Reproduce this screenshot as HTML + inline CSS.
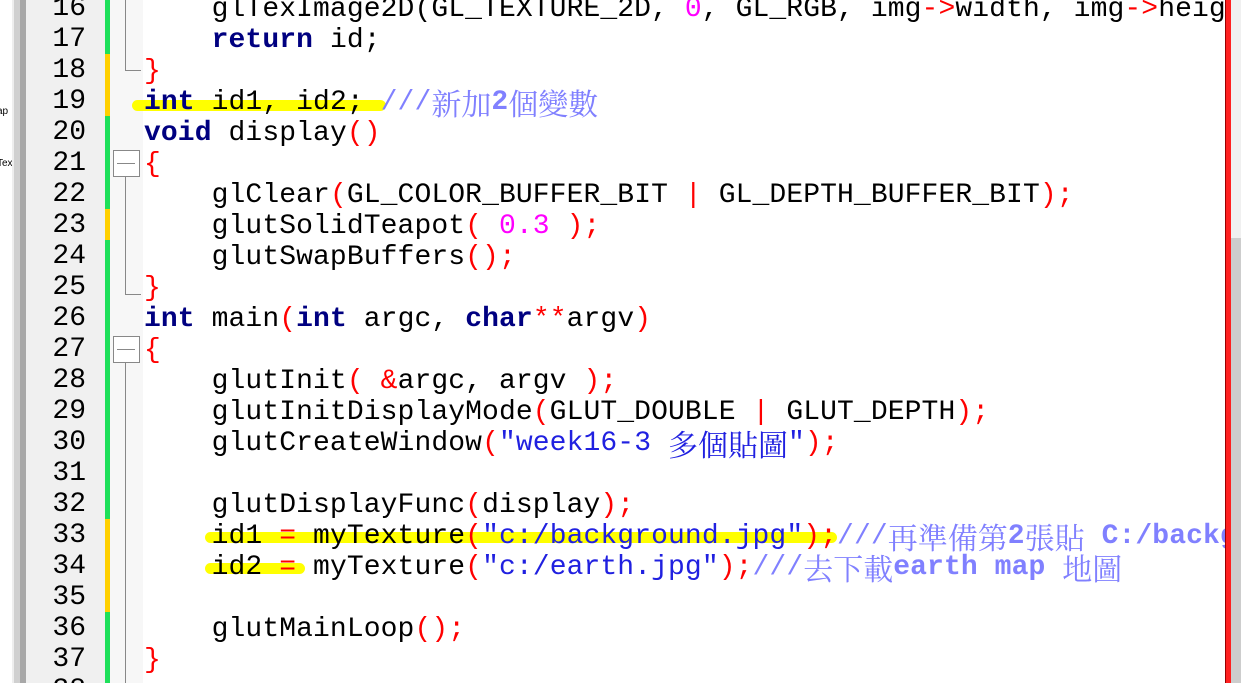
<!DOCTYPE html><html><head><meta charset="utf-8"><style>
html,body{margin:0;width:1241px;height:683px;overflow:hidden}
body{background:#fff;position:relative;font-family:"Liberation Mono",monospace}
.a{position:absolute}
.code{position:absolute;left:144px;top:-6px;font-size:28px;letter-spacing:0.1px;color:#000;width:1081px;height:691px;overflow:hidden}
.code div{white-space:pre}
.code div,.num div{height:31px;line-height:31px;overflow:visible}
.num{position:absolute;left:26px;width:60px;top:-7px;font-size:28px;text-align:right;color:#000;height:691px;overflow:hidden}
.k{color:#000080;font-weight:bold}.o{color:#ff0000}.s{color:#2020e0}.n{color:#ff00ff}
.c{color:#8080ff}
.cj{font-family:"Noto Serif CJK SC","Noto Sans CJK TC",serif;letter-spacing:0;font-size:30px;line-height:31px;vertical-align:top}
.cb{font-weight:bold}
.hl{position:absolute;background:#ffff00;border-radius:6px;height:11px}
</style></head><body>
<div class="a" style="left:0;top:0;width:12px;height:683px;background:#fff;font:10px 'Liberation Sans',sans-serif;color:#000;overflow:hidden"><span class="a" style="top:106px;left:-3px">ap</span><span class="a" style="top:158px;left:-3px">Tex</span></div>
<div class="a" style="left:12px;top:0;width:14px;height:683px;background:#d0d0d0;border-left:2px solid #eee;box-sizing:border-box"></div>
<div class="a" style="left:20px;top:0;width:6px;height:683px;background:#a8a8a8"></div>
<div class="a" style="left:26px;top:0;width:79px;height:683px;background:#f0f0f0"></div>
<div class="a" style="left:110px;top:0;width:33px;height:683px;background:#f7f7f7"></div>
<div class="a" style="left:105px;top:0;width:5px;height:683px;background:#1ee05a"></div>
<div class="a" style="left:105px;top:54px;width:5px;height:62px;background:#ffd000"></div>
<div class="a" style="left:105px;top:209px;width:5px;height:31px;background:#ffd000"></div>
<div class="a" style="left:105px;top:519px;width:5px;height:93px;background:#ffd000"></div>
<div class="a" style="left:125px;top:0;width:15px;height:70px;border-left:1px solid #888;border-bottom:1px solid #888"></div>
<div class="a" style="left:113px;top:150px;width:25px;height:25px;border:1px solid #888;background:#fff"></div>
<div class="a" style="left:117px;top:163px;width:18px;height:1px;background:#888"></div>
<div class="a" style="left:125px;top:177px;width:15px;height:117px;border-left:1px solid #888;border-bottom:1px solid #888"></div>
<div class="a" style="left:113px;top:336px;width:25px;height:25px;border:1px solid #888;background:#fff"></div>
<div class="a" style="left:117px;top:349px;width:18px;height:1px;background:#888"></div>
<div class="a" style="left:125px;top:363px;width:1px;height:320px;background:#888"></div>
<div class="hl" style="left:132px;top:100px;width:254px"></div>
<div class="hl" style="left:205px;top:532px;width:632px"></div>
<div class="hl" style="left:205px;top:563px;width:100px"></div>
<div class="num"><div>16</div><div>17</div><div>18</div><div>19</div><div>20</div><div>21</div><div>22</div><div>23</div><div>24</div><div>25</div><div>26</div><div>27</div><div>28</div><div>29</div><div>30</div><div>31</div><div>32</div><div>33</div><div>34</div><div>35</div><div>36</div><div>37</div><div>38</div></div>
<div class="code"><div>    glTexImage2D(GL_TEXTURE_2D, <span class="n">0</span>, GL_RGB, img<span class="o">-&gt;</span>width, img<span class="o">-&gt;</span>height</div><div>    <span class="k">return</span> id;</div><div><span class="o">}</span></div><div><span class="k">int</span> id1, id2; <span class="c">///<span class="cj">新加</span><span class="cb">2</span><span class="cj">個變數</span></span></div><div><span class="k">void</span> display<span class="o">()</span></div><div><span class="o">{</span></div><div>    glClear<span class="o">(</span>GL_COLOR_BUFFER_BIT <span class="o">|</span> GL_DEPTH_BUFFER_BIT<span class="o">);</span></div><div>    glutSolidTeapot<span class="o">(</span> <span class="n">0.3</span> <span class="o">);</span></div><div>    glutSwapBuffers<span class="o">();</span></div><div><span class="o">}</span></div><div><span class="k">int</span> main<span class="o">(</span><span class="k">int</span> argc, <span class="k">char</span><span class="o">**</span>argv<span class="o">)</span></div><div><span class="o">{</span></div><div>    glutInit<span class="o">(</span> <span class="o">&amp;</span>argc, argv <span class="o">);</span></div><div>    glutInitDisplayMode<span class="o">(</span>GLUT_DOUBLE <span class="o">|</span> GLUT_DEPTH<span class="o">);</span></div><div>    glutCreateWindow<span class="o">(</span><span class="s">"week16-3 <span class="cj">多個貼圖</span>"</span><span class="o">);</span></div><div> </div><div>    glutDisplayFunc<span class="o">(</span>display<span class="o">);</span></div><div>    id1 <span class="o">=</span> myTexture<span class="o">(</span><span class="s">"c:/background.jpg"</span><span class="o">);</span><span class="c">///<span class="cj">再準備第</span><span class="cb">2</span><span class="cj">張貼</span> <span class="cb">C:/background</span></span></div><div>    id2 <span class="o">=</span> myTexture<span class="o">(</span><span class="s">"c:/earth.jpg"</span><span class="o">);</span><span class="c">///<span class="cj">去下載</span><span class="cb">earth map</span> <span class="cj">地圖</span></span></div><div> </div><div>    glutMainLoop<span class="o">();</span></div><div><span class="o">}</span></div></div>
<div class="a" style="left:1225px;top:0;width:6px;height:683px;background:#ff2020;border-left:1px solid #900;box-sizing:border-box"></div>
<div class="a" style="left:1231px;top:0;width:10px;height:683px;background:#f0f0f0"></div>
<div class="a" style="left:1231px;top:238px;width:10px;height:445px;background:#cdcdcd"></div>
</body></html>
